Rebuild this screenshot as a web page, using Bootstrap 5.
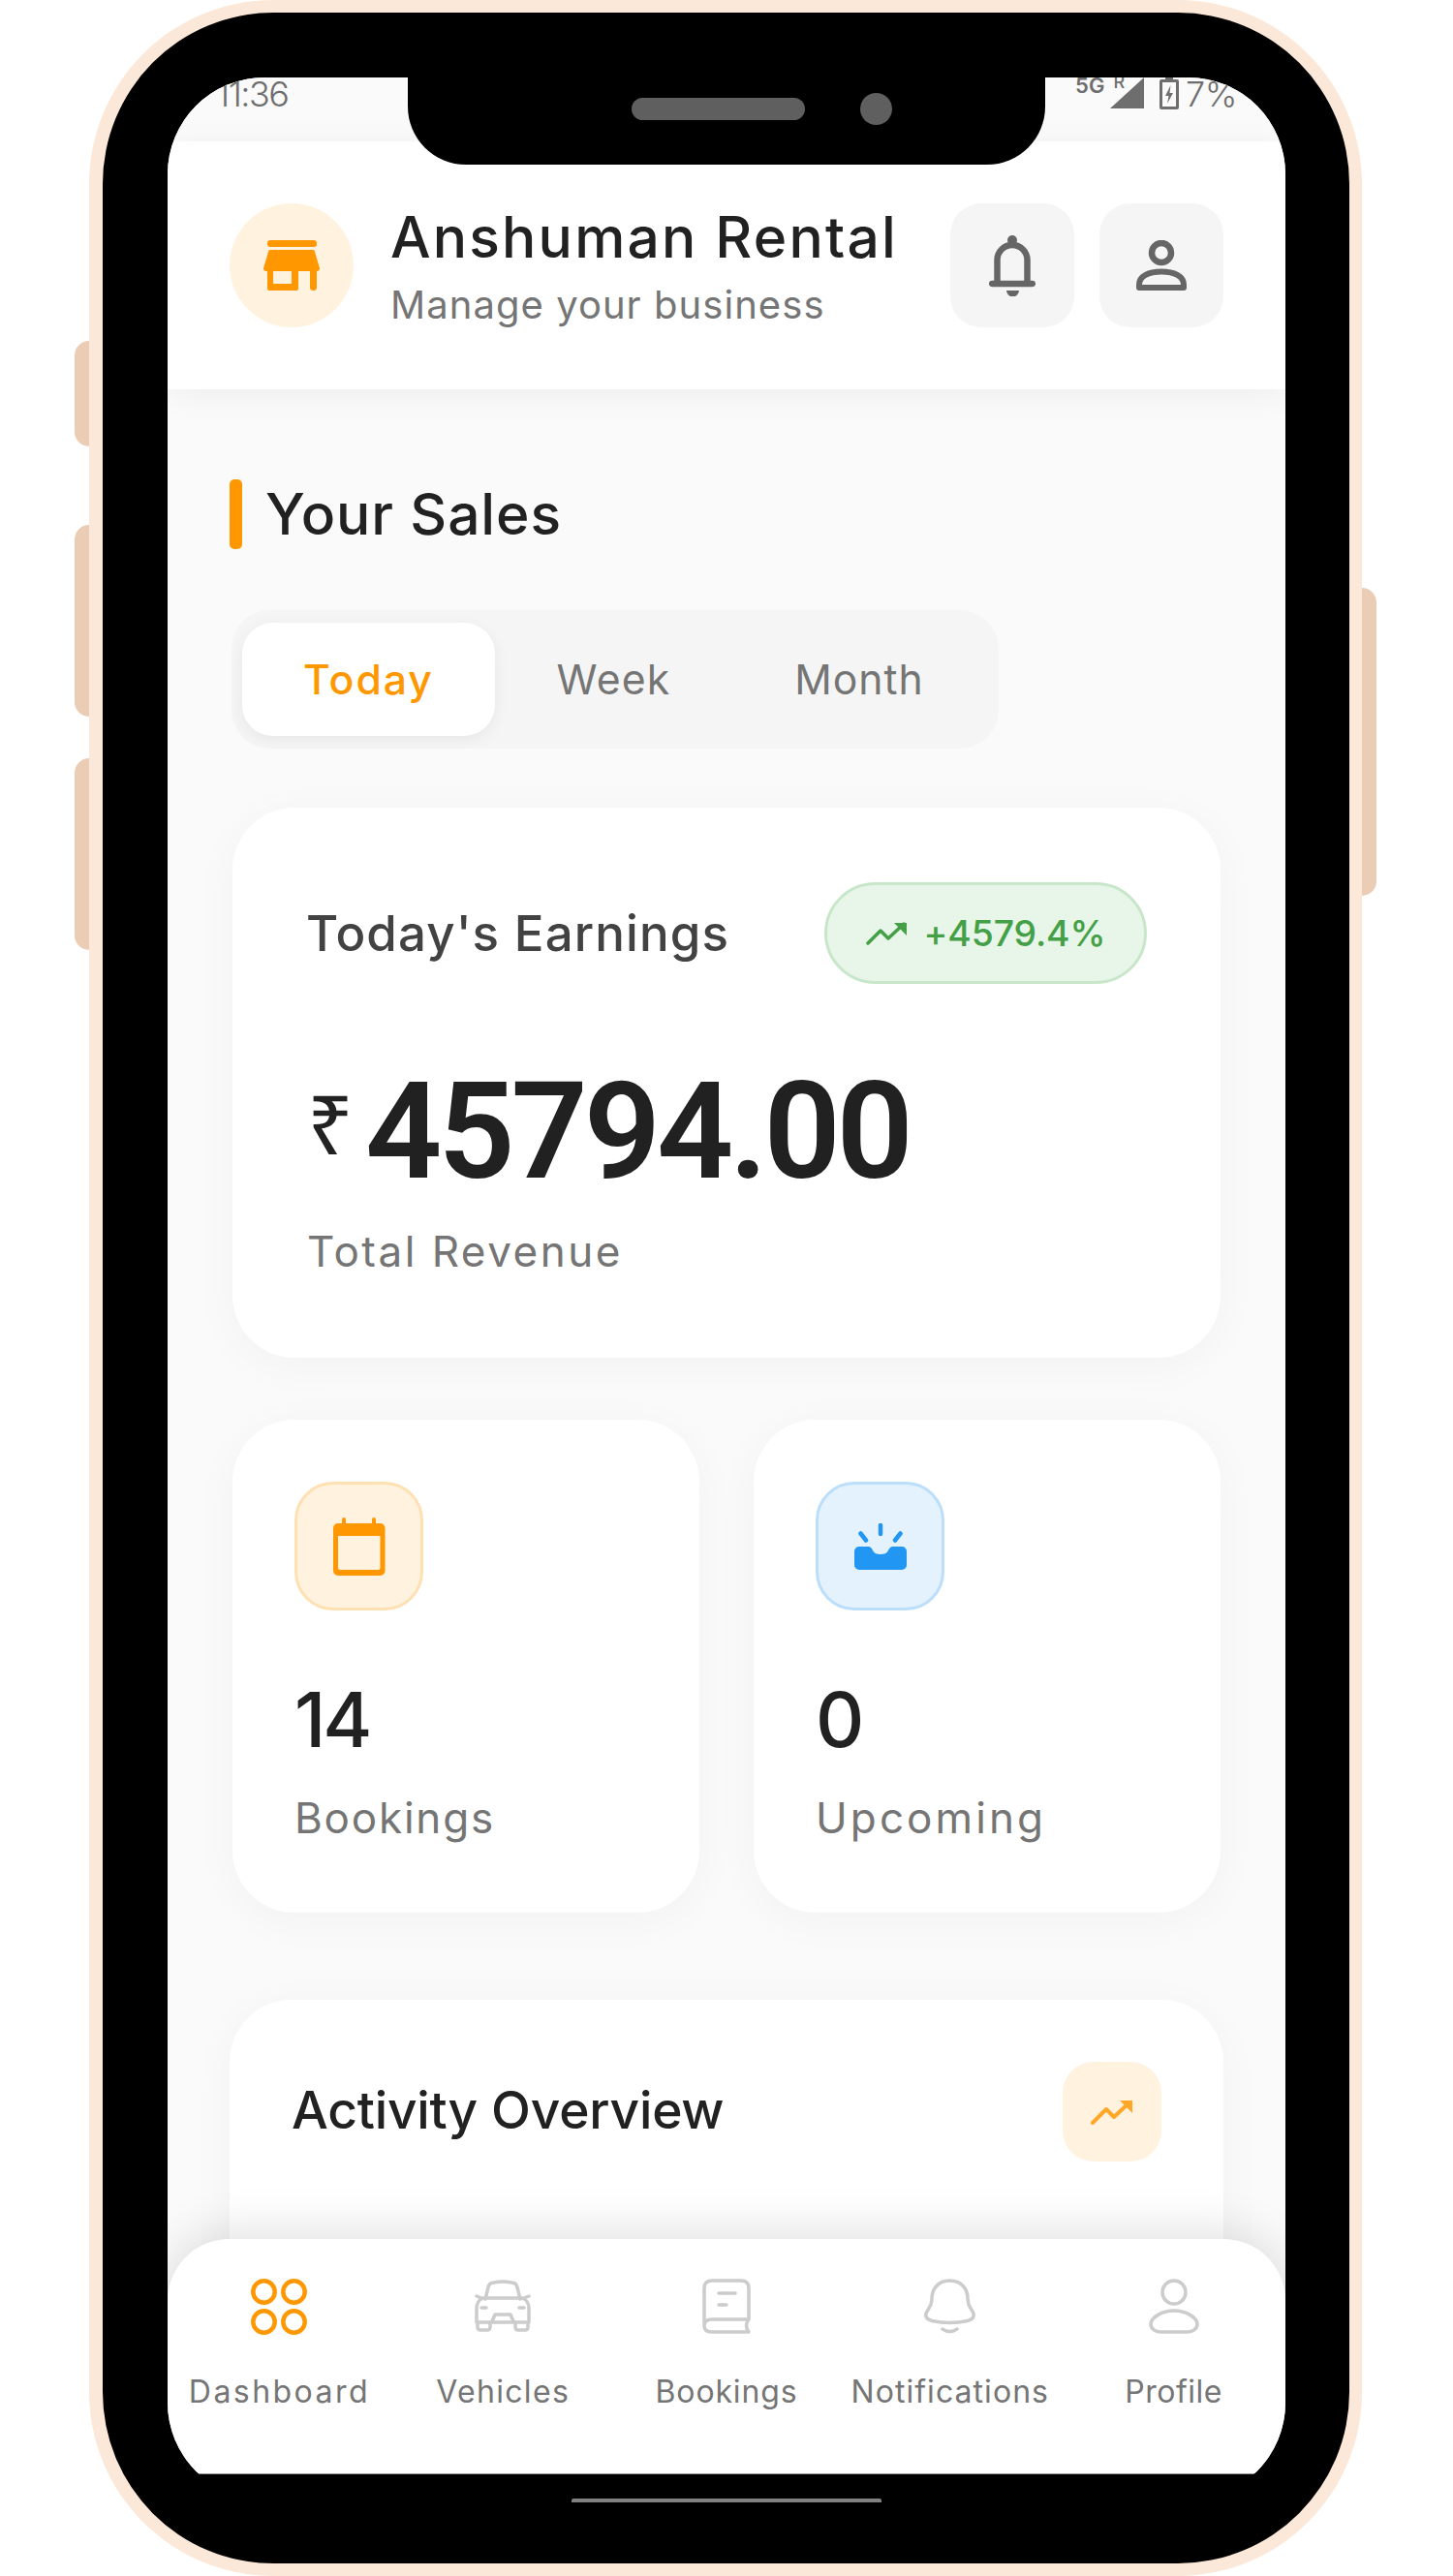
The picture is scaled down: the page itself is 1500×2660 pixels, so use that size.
<!DOCTYPE html>
<html lang="en">
<head>
<meta charset="utf-8">
<title>Anshuman Rental</title>
<link href="https://cdn.jsdelivr.net/npm/bootstrap@5.3.0/dist/css/bootstrap.min.css" rel="stylesheet">
<style>
html,body{margin:0;background:#fff;}
body{font-family:"Inter","Noto Sans",sans-serif;color:#212121;}
.pg{width:1500px;height:2660px;padding-left:92px;overflow:hidden;}
.phone{position:relative;width:1314px;height:2660px;box-sizing:border-box;background:#000;border:solid #fce8d8;border-width:13px 13px 13px 14px;border-radius:190px;padding:67px 66px 0 67px;}
.sidebtn{position:absolute;background:#ebcdb6;width:15px;}
.sl{left:-29px;border-radius:16px 0 0 16px;}
.sr{right:-28px;top:594px;height:318px;border-radius:0 16px 16px 0;}
.s1{top:339px;height:109px}.s2{top:529px;height:198px}.s3{top:770px;height:198px}
.screen{position:relative;width:1154px;height:2501px;border-radius:100px;overflow:hidden;background:#fafafa;}
.notch{position:absolute;left:315px;top:67px;width:658px;height:90px;padding-bottom:26px;background:#000;border-radius:0 0 60px 60px;z-index:5;}
.spk{width:179px;height:23px;border-radius:12px;background:#5f5f5f;margin-left:231px;}
.cam{width:33px;height:33px;border-radius:50%;background:#5f5f5f;margin-left:57px;}
.homebar{position:absolute;left:0;right:0;bottom:0;height:27px;background:#000;border-top:1px solid #999;z-index:5;}
.homecov{position:absolute;left:67px;right:66px;top:2542px;height:40px;background:#000;z-index:5;}
.homeline{position:absolute;left:484px;width:320px;top:2567px;height:4px;background:#808080;border-radius:2px 2px 0 0;z-index:6;}
.sbar{height:66px;background:#fafafa;padding:0 50px 0 50px;color:#6e6e6e;font-weight:300;font-size:36px;line-height:1;letter-spacing:-1.5px;}
.sbar span{display:block;margin-top:-1px;}
.sbar .seven{letter-spacing:-.5px;margin-left:7px;}
.sbar .fiveg{font-size:22px;font-weight:600;letter-spacing:0;margin-top:-3px;}
.sbar .rchar{font-size:18px;font-weight:500;letter-spacing:0;margin:-4px -15px 0 9px;}
.hdr{height:256px;background:#fff;padding:0 64px;box-shadow:0 6px 32px rgba(0,0,0,.05);position:relative;z-index:1;}
.logo{width:128px;height:128px;border-radius:50%;background:#fff3e0;}
.hname{margin-left:38px;}
.ttl{font-size:58.7px;font-weight:500;line-height:1;color:#212121;letter-spacing:2.2px;white-space:nowrap;margin-top:3px;}
.sub{font-size:40px;font-weight:400;line-height:1;color:#757575;margin-top:20px;letter-spacing:1.05px;white-space:nowrap;}
.igap{gap:26px;}
.ibtn{width:128px;height:128px;border-radius:32px;background:#f5f5f5;}
.mainc{padding:93px 64px 0;}
.secbar{width:13px;height:72px;border-radius:5px;background:#ff9800;margin-right:24px;}
.sect{font-size:58.7px;font-weight:500;line-height:72px;color:#212121;letter-spacing:.9px;}
.tabsw{width:792px;height:143px;padding:13px 12px 13px 11px;margin:63px 0 61px 2px;background:#f5f5f5;border-radius:40px;}
.tabi{height:117px;padding-top:2px;font-size:42.7px;color:#757575;font-weight:400;line-height:1;}
.tabi.on{background:#fff;color:#ff9800;font-weight:500;border-radius:32px;box-shadow:0 4px 16px rgba(0,0,0,.06);}
.t1{width:261px;letter-spacing:2px}.t2{width:245px;letter-spacing:1.2px}.t3{width:262px;letter-spacing:1px}
.ecard,.scard,.acard{background:#fff;border-radius:64px;box-shadow:0 8px 48px rgba(0,0,0,.035);}
.ecard{height:568px;margin:0 3px 64px;padding:77px 76px 0 76px;}
.eh{font-size:51px;font-weight:500;line-height:1;color:#424242;letter-spacing:1.1px;}
.gbadge{width:333px;height:105px;border-radius:53px;background:#e8f5e9;border:3px solid #c8e6c9;color:#43a047;font-size:37.3px;font-weight:500;letter-spacing:-.1px;}
.amrow{margin-top:83px;}
.rup{font-family:"Noto Sans",sans-serif;font-size:84px;font-weight:400;line-height:1;color:#212121;margin-top:19px;margin-left:1px;}
.amt{font-family:"Roboto",sans-serif;font-size:139px;font-weight:600;line-height:1;color:#212121;letter-spacing:-4.2px;margin-left:12px;}
.tr{font-size:44px;color:#757575;line-height:1;margin-top:32px;margin-left:1px;letter-spacing:2.5px;}
.srow{margin:0 3px 90px;gap:56px;}
.scard{flex:1 1 0;height:509px;padding:64px;}
.tile{width:133px;height:133px;border-radius:40px;}
.to{background:#fff3e0;border:3px solid #ffe0b2;}
.tb{background:#e3f2fd;border:3px solid #bbdefb;}
.num{font-size:78px;font-weight:500;line-height:1;margin-top:74px;color:#212121;letter-spacing:-3px;}
.lbl{font-size:44px;line-height:1;color:#757575;margin-top:40px;}
.lb1{letter-spacing:1.8px}.lb2{letter-spacing:3.1px}
.acard{height:600px;padding:64px;}
.at{font-size:53.3px;font-weight:500;line-height:1;color:#212121;letter-spacing:-.2px;margin-top:23px;}
.atile{width:102px;height:103px;border-radius:32px;background:#fff3e0;}
.bnav{position:absolute;left:0;right:0;bottom:0;height:269px;background:#fff;border-radius:64px 64px 0 0;box-shadow:0 -8px 48px rgba(0,0,0,.12);z-index:2;padding-top:41px;}
.nitm{flex:1 1 0;min-width:0;}
.nico{height:57px;}
.nl{font-size:32px;line-height:1;color:#757575;margin-top:44px;white-space:nowrap;}
.nl1{letter-spacing:2.45px}.nl2{letter-spacing:1.3px}.nl3{letter-spacing:.85px}.nl4{letter-spacing:1.05px}.nl5{letter-spacing:.5px}
svg{display:block;}
</style>
</head>
<body>
<div class="pg">
<div class="phone">
  <div class="sidebtn sl s1"></div><div class="sidebtn sl s2"></div><div class="sidebtn sl s3"></div><div class="sidebtn sr"></div>
  <div class="notch d-flex align-items-center"><div class="spk"></div><div class="cam"></div></div>
  <div class="homecov"></div>
  <div class="homeline"></div>
  <div class="screen d-flex flex-column">
    <div class="homebar"></div>
    <div class="sbar flex-shrink-0 d-flex justify-content-between align-items-start">
      <span>11:36</span>
      <div class="d-flex align-items-start">
        <span class="fiveg">5G</span><span class="rchar">R</span>
        <svg width="35" height="32" viewBox="0 0 35 32"><path d="M35 0V32H0Z" fill="#6e6e6e"/></svg>
        <svg class="ms-3" width="20" height="33" viewBox="0 0 20 33"><path d="M6 0h8v2h4a2 2 0 0 1 2 2v27a2 2 0 0 1-2 2H2a2 2 0 0 1-2-2V4a2 2 0 0 1 2-2h4Z" fill="#6e6e6e"/><rect x="3" y="5" width="14" height="25" fill="#fafafa"/><path d="M11.500 8 6 19h3.500L8 27l6-11h-3.500Z" fill="#6e6e6e"/></svg>
        <span class="seven">7%</span>
      </div>
    </div>
    <div class="hdr flex-shrink-0 d-flex align-items-center justify-content-between">
      <div class="d-flex align-items-center">
        <div class="logo d-flex align-items-center justify-content-center">
          <svg width="58" height="52" viewBox="0 0 58 52"><rect x="4" y="0" width="51" height="7" rx="3" fill="#ff9800"/><path d="M7 10H51a2 2 0 0 1 2 2L58 29a3 3 0 0 1-3 3H3a3 3 0 0 1-3-3L5 12a2 2 0 0 1 2-2Z" fill="#ff9800"/><path fill-rule="evenodd" d="M4 32H36V50a2 2 0 0 1-2 2H6a2 2 0 0 1-2-2ZM10 32V45H29V32Z" fill="#ff9800"/><path d="M48 32h7V49a3.500 3 0 0 1-7 0Z" fill="#ff9800"/></svg>
        </div>
        <div class="hname">
          <div class="ttl">Anshuman Rental</div>
          <div class="sub">Manage your business</div>
        </div>
      </div>
      <div class="d-flex igap">
        <div class="ibtn d-flex align-items-center justify-content-center">
          <svg width="48" height="63" viewBox="0 0 48 63"><circle cx="24" cy="5" r="5" fill="#666"/><path d="M8.500 49V25.500a15.500 15.500 0 0 1 31 0V49" fill="none" stroke="#666" stroke-width="6.500"/><path d="M3.200 50H44.800" stroke="#666" stroke-width="6.500" stroke-linecap="round"/><path d="M18 57h13a6.500 6.500 0 0 1-13 0Z" fill="#666"/></svg>
        </div>
        <div class="ibtn d-flex align-items-center justify-content-center">
          <svg width="52" height="52" viewBox="0 0 52 52"><circle cx="26" cy="13" r="10" fill="none" stroke="#666" stroke-width="6.500"/><path d="M3 49V46C3 37 13 32.500 26 32.500S49 37 49 46V49Z" fill="none" stroke="#666" stroke-width="6" stroke-linejoin="round"/></svg>
        </div>
      </div>
    </div>
    <div class="mainc">
      <div class="d-flex align-items-center"><div class="secbar"></div><div class="sect">Your Sales</div></div>
      <div class="tabsw d-flex">
        <div class="tabi on t1 d-flex align-items-center justify-content-center">Today</div>
        <div class="tabi t2 d-flex align-items-center justify-content-center">Week</div>
        <div class="tabi t3 d-flex align-items-center justify-content-center">Month</div>
      </div>
      <div class="ecard">
        <div class="d-flex justify-content-between align-items-center">
          <div class="eh">Today's Earnings</div>
          <div class="gbadge d-flex align-items-center justify-content-center">
            <svg class="me-3" width="44" height="25" viewBox="0 0 44 25"><path d="M2 23 15 10l8 8L39 3" fill="none" stroke="#43a047" stroke-width="3.500" stroke-linecap="round" stroke-linejoin="round"/><path d="M29 2H42V15Z" fill="#43a047"/></svg>
            +4579.4%
          </div>
        </div>
        <div class="amrow d-flex align-items-start">
          <div class="rup">₹</div>
          <div class="amt">45794.00</div>
        </div>
        <div class="tr">Total Revenue</div>
      </div>
      <div class="srow d-flex">
        <div class="scard">
          <div class="tile to d-flex align-items-center justify-content-center">
            <svg width="54" height="60" viewBox="0 0 54 60"><path fill-rule="evenodd" fill="#ff9800" d="M9 6V2a2 2 0 0 1 4 0V6H40V2a2 2 0 0 1 4 0V6h4.500a5 5 0 0 1 5 5V55a5 5 0 0 1-5 5H5a5 5 0 0 1-5-5V11a5 5 0 0 1 5-5ZM5 19V52a2 2 0 0 0 2 2H46.500a2 2 0 0 0 2-2V19Z"/></svg>
          </div>
          <div class="num">14</div>
          <div class="lbl lb1">Bookings</div>
        </div>
        <div class="scard">
          <div class="tile tb d-flex align-items-center justify-content-center">
            <svg width="54" height="48" viewBox="0 0 54 48"><path fill="#2196f3" d="M5 24H14C17 24 18 26 19 28C20.500 31 23.500 32 27 32S33.500 31 35 28C36 26 37 24 40 24H49A5 5 0 0 1 54 29V43A5 5 0 0 1 49 48H5A5 5 0 0 1 0 43V29A5 5 0 0 1 5 24Z"/><path d="M27 2V11M6.500 10.500 12 17.500M47.500 10.500 42 17.500" stroke="#2196f3" stroke-width="4.500" stroke-linecap="round" fill="none"/></svg>
          </div>
          <div class="num">0</div>
          <div class="lbl lb2">Upcoming</div>
        </div>
      </div>
      <div class="acard d-flex justify-content-between align-items-start">
        <div class="at">Activity Overview</div>
        <div class="atile d-flex align-items-center justify-content-center">
          <svg width="44" height="26" viewBox="0 0 44 26"><path d="M2 24 16 10l8 8L39 4" fill="none" stroke="#ffa726" stroke-width="4" stroke-linecap="round" stroke-linejoin="round"/><path d="M30 1H43V14Z" fill="#ffa726"/></svg>
        </div>
      </div>
    </div>
    <nav class="bnav d-flex">
      <div class="nitm d-flex flex-column align-items-center">
        <div class="nico"><svg width="58" height="58" viewBox="0 0 58 58" fill="none" stroke="#ff9800" stroke-width="4.500"><circle cx="13.500" cy="13.500" r="11.200"/><circle cx="44.500" cy="13.500" r="11.200"/><circle cx="13.500" cy="44.500" r="11.200"/><circle cx="44.500" cy="44.500" r="11.200"/></svg></div>
        <div class="nl nl1">Dashboard</div>
      </div>
      <div class="nitm d-flex flex-column align-items-center">
        <div class="nico"><svg width="58" height="56" viewBox="0 0 58 56" fill="none" stroke="#ccc" stroke-width="3.500" stroke-linecap="round" stroke-linejoin="round"><path d="M11 21 14 9Q15 4 20 4 29 2 38 4 43 4 44 9L47 21"/><path d="M9 20H49C53 21 56 25 56 31V45H2V31C2 25 5 21 9 20Z"/><path d="M3 45V50Q3 53 6 53H13Q16 53 16 50V45M42 45V50Q42 53 45 53H52Q55 53 55 50V45M18 44 21 37H37L40 44M2 18 7 20M56 18 51 20M7 30H12M46 30H51"/></svg></div>
        <div class="nl nl2">Vehicles</div>
      </div>
      <div class="nitm d-flex flex-column align-items-center">
        <div class="nico"><svg width="50" height="57" viewBox="0 0 50 57" fill="none" stroke="#ccc" stroke-width="3.500" stroke-linecap="round" stroke-linejoin="round"><path d="M2 48V10Q2 2 10 2H40Q48 2 48 10V42H10Q2 42 2 48.500 2 55 10 55H48Q43 48.500 48 42"/><path d="M17 15H34M17 27H25"/></svg></div>
        <div class="nl nl3">Bookings</div>
      </div>
      <div class="nitm d-flex flex-column align-items-center">
        <div class="nico"><svg width="55" height="57" viewBox="0 0 55 57" fill="none" stroke="#ccc" stroke-width="3.500" stroke-linecap="round" stroke-linejoin="round"><path d="M27.500 2C15 2 9 11 9 21 9 27 7 29 4.500 33 1 38 3 42 9 43.500 20 46 35 46 46 43.500 52 42 54 38 50.500 33 48 29 46 27 46 21 46 11 40 2 27.500 2Z"/><path d="M20 52Q27.500 57 35 52"/></svg></div>
        <div class="nl nl4">Notifications</div>
      </div>
      <div class="nitm d-flex flex-column align-items-center">
        <div class="nico"><svg width="52" height="57" viewBox="0 0 52 57" fill="none" stroke="#ccc" stroke-width="3.500" stroke-linecap="round" stroke-linejoin="round"><ellipse cx="26" cy="14" rx="12" ry="12"/><path d="M26 33C14 33 2 40 2 47 2 52 7 55 12 55H40C45 55 50 52 50 47 50 40 38 33 26 33Z"/></svg></div>
        <div class="nl nl5">Profile</div>
      </div>
    </nav>
  </div>
</div>
</div>
<script src="https://cdn.jsdelivr.net/npm/bootstrap@5.3.0/dist/js/bootstrap.bundle.min.js"></script>
</body>
</html>
